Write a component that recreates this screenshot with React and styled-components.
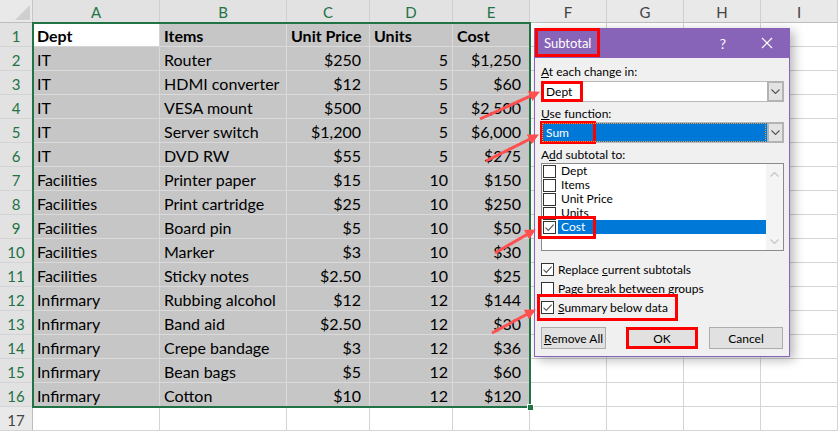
import React from 'react';
import styled, { createGlobalStyle, css } from 'styled-components';

const GlobalStyle = createGlobalStyle`
  html, body { margin: 0; padding: 0; background: #fff; }
  body { font-family: Lato, "Liberation Sans", sans-serif; }
  #root { width: 838px; height: 432px; }
`;

const cols = ['A', 'B', 'C', 'D', 'E', 'F', 'G', 'H', 'I'];
const data = [
  ['Dept', 'Items', 'Unit Price', 'Units', 'Cost'],
  ['IT', 'Router', '$250', '5', '$1,250'],
  ['IT', 'HDMI converter', '$12', '5', '$60'],
  ['IT', 'VESA mount', '$500', '5', '$2,500'],
  ['IT', 'Server switch', '$1,200', '5', '$6,000'],
  ['IT', 'DVD RW', '$55', '5', '$275'],
  ['Facilities', 'Printer paper', '$15', '10', '$150'],
  ['Facilities', 'Print cartridge', '$25', '10', '$250'],
  ['Facilities', 'Board pin', '$5', '10', '$50'],
  ['Facilities', 'Marker', '$3', '10', '$30'],
  ['Facilities', 'Sticky notes', '$2.50', '10', '$25'],
  ['Infirmary', 'Rubbing alcohol', '$12', '12', '$144'],
  ['Infirmary', 'Band aid', '$2.50', '12', '$30'],
  ['Infirmary', 'Crepe bandage', '$3', '12', '$36'],
  ['Infirmary', 'Bean bags', '$5', '12', '$60'],
  ['Infirmary', 'Cotton', '$10', '12', '$120'],
];

const gridTemplate = css`
  display: grid;
  grid-template-columns: 33px 127px 127px 83px 83px repeat(5, 77px);
  grid-template-rows: 23px repeat(17, 24px);
`;

const Stage = styled.div`
  position: relative;
  display: grid;
  width: 838px;
  height: 432px;
  overflow: hidden;
  background: #fff;
`;

const Sheet = styled.div`
  ${gridTemplate};
  grid-area: 1 / 1;
`;

const Layer = styled.div`
  ${gridTemplate};
  grid-area: 1 / 1;
  pointer-events: none;
  z-index: 1;
`;

const Corner = styled.div`
  position: relative;
  background: #e9e9e9;
  border-right: 1px solid #c6c6c6;
  border-bottom: 1px solid #bdbdbd;
  &::after {
    content: '';
    position: absolute;
    right: 2px;
    bottom: 2px;
    border-style: solid;
    border-width: 0 0 15px 15px;
    border-color: transparent transparent #cfcfcf transparent;
  }
`;

const ColHead = styled.div`
  background: ${(p) => (p.$active ? '#e2e2e2' : '#e9e9e9')};
  color: ${(p) => (p.$active ? '#217346' : '#444')};
  border-right: 1px solid #cfcfcf;
  border-bottom: 1px solid #bdbdbd;
  display: flex;
  align-items: center;
  justify-content: center;
  font-size: 15px;
  line-height: 20px;
  padding-top: 1px;
`;

const RowHead = styled.div`
  background: ${(p) => (p.$active ? '#e2e2e2' : '#e9e9e9')};
  color: ${(p) => (p.$active ? '#217346' : '#444')};
  border-right: 1px solid #bdbdbd;
  border-bottom: 1px solid #d4d4d4;
  display: flex;
  align-items: flex-end;
  justify-content: center;
  font-size: 15px;
  line-height: 20px;
`;

const Cell = styled.div`
  background: ${(p) => (p.$sel ? '#c6c6c6' : '#fff')};
  border-right: 1px solid ${(p) => (p.$sel ? '#dadada' : '#d4d4d4')};
  border-bottom: 1px solid ${(p) => (p.$sel ? '#dadada' : '#d4d4d4')};
  display: flex;
  align-items: flex-end;
  justify-content: ${(p) => (p.$num ? 'flex-end' : 'flex-start')};
  padding: 0 ${(p) => p.$pr}px 0 4px;
  font-size: 16px;
  line-height: 20px;
  font-weight: ${(p) => (p.$bold ? 700 : 400)};
  color: #000;
  white-space: nowrap;
  overflow: hidden;
`;

const Selection = styled.div`
  grid-column: 2 / 7;
  grid-row: 2 / 18;
  margin: -1px;
  border: 2px solid #217346;
  position: relative;
`;

const FillHandle = styled.span`
  position: absolute;
  right: -5px;
  bottom: -5px;
  width: 5px;
  height: 5px;
  background: #217346;
  border: 1px solid #fff;
`;

/* ---------- dialog ---------- */

const mark = css`
  outline: 3px solid #f00;
  outline-offset: -3px;
`;

const Dialog = styled.div`
  position: absolute;
  left: 534px;
  top: 28px;
  width: 256px;
  height: 329px;
  box-sizing: border-box;
  background: #f0f0f0;
  border: 1px solid #8764b8;
  box-shadow: 4px 3px 10px rgba(0, 0, 0, 0.28);
  display: flex;
  flex-direction: column;
  z-index: 2;
  font-family: Lato, "Liberation Sans", sans-serif;
  font-size: 12px;
  color: #000;
`;

const TitleBar = styled.div`
  height: 30px;
  margin: -1px -1px 0 -1px;
  background: #8764b8;
  display: flex;
  align-items: stretch;
  color: #fff;
`;

const TitleText = styled.span`
  display: flex;
  align-items: center;
  height: 29px;
  padding: 0 9px 0 9px;
  margin-left: 1px;
  font-size: 13px;
  ${(p) => p.$mark && mark};
`;

const Spacer = styled.span`
  flex: 1;
`;

const HelpBtn = styled.span`
  width: 24px;
  margin-right: 9px;
  display: flex;
  align-items: center;
  justify-content: center;
  font-size: 14px;
`;

const CloseBtn = styled.span`
  width: 46px;
  display: flex;
  align-items: center;
  justify-content: center;
`;

const Body = styled.div`
  display: flex;
  flex-direction: column;
  padding: 0 5px 0 6px;
`;

const Label = styled.div`
  line-height: 14px;
  margin-top: ${(p) => p.$mt}px;
  white-space: nowrap;
`;

const Combo = styled.div`
  display: flex;
  height: 21px;
  margin-top: ${(p) => p.$mt}px;
`;

const ComboField = styled.div`
  flex: 1;
  display: flex;
  align-items: stretch;
  background: ${(p) => (p.$focus ? '#0078d7' : '#fff')};
  color: ${(p) => (p.$focus ? '#fff' : '#000')};
  border: 1px solid #b9b9b9;
  border-right: none;
  ${(p) => p.$focus && css`
    outline: 1px dotted #e8a040;
    outline-offset: -2px;
  `};
`;

const ComboValue = styled.span`
  display: flex;
  align-items: center;
  width: ${(p) => p.$w}px;
  margin: -1px 0 -1px -1px;
  padding-left: 5px;
  box-sizing: border-box;
  ${(p) => p.$mark && css`
    outline: 3px solid #f00;
    outline-offset: ${p.$off}px;
  `};
`;

const DropBtn = styled.div`
  width: 17px;
  box-sizing: border-box;
  background: #e3e3e3;
  border: 2px solid #b3b3b3;
  display: flex;
  align-items: center;
  justify-content: center;
`;

const ListBox = styled.div`
  display: flex;
  height: 88px;
  margin-top: 1px;
  box-sizing: border-box;
  background: #fff;
  border: 1px solid #8a8a8a;
`;

const ListItems = styled.div`
  flex: 1;
  display: flex;
  flex-direction: column;
`;

const ListItem = styled.div`
  position: relative;
  height: 14px;
  display: flex;
  align-items: center;
  padding-left: 1px;
  ${(p) => p.$mark && css`
    &::after {
      content: '';
      position: absolute;
      left: -4px;
      top: -4px;
      width: 58px;
      height: 23px;
      box-sizing: border-box;
      border: 3px solid #f00;
    }
  `};
`;

const ItemText = styled.span`
  flex: 1;
  margin-left: 2px;
  padding-left: 3px;
  line-height: 14px;
  background: ${(p) => (p.$sel ? '#0078d7' : 'transparent')};
  color: ${(p) => (p.$sel ? '#fff' : '#000')};
`;

const ScrollBar = styled.div`
  width: 17px;
  background: #f4f4f4;
  display: flex;
  flex-direction: column;
  justify-content: space-between;
  align-items: center;
  padding: 8px 0 6px;
`;

const Box = styled.span`
  width: 13px;
  height: 13px;
  box-sizing: border-box;
  border: 1px solid #333;
  background: #fff;
  display: inline-flex;
  align-items: center;
  justify-content: center;
  flex: none;
`;

const CheckRow = styled.div`
  display: flex;
  align-items: center;
  align-self: flex-start;
  height: 19px;
  margin-top: ${(p) => p.$mt || 0}px;
  padding-right: ${(p) => (p.$mark ? 6 : 0)}px;
  ${(p) => p.$mark && css`
    outline: 3px solid #f00;
    outline-offset: 1px;
  `};
`;

const CheckText = styled.span`
  margin-left: 4px;
  white-space: nowrap;
`;

const Buttons = styled.div`
  display: flex;
  margin-top: 10px;
`;

const Button = styled.div`
  height: 22px;
  width: ${(p) => p.$w}px;
  margin-left: ${(p) => p.$ml || 0}px;
  box-sizing: border-box;
  background: #e1e1e1;
  border: 1px solid #adadad;
  display: flex;
  align-items: center;
  justify-content: center;
  ${(p) => p.$mark && mark};
`;

const ArrowLayer = styled.svg`
  position: absolute;
  left: 0;
  top: 0;
  z-index: 3;
  pointer-events: none;
`;

function Check({ checked }) {
  return (
    <Box>
      {checked && (
        <svg width="11" height="11" viewBox="0 0 11 11">
          <path d="M1.5 5.6 L4.3 8.4 L9.6 2.6" fill="none" stroke="#555" strokeWidth="1.1" />
        </svg>
      )}
    </Box>
  );
}

function Chevron({ color = '#555', up }) {
  return (
    <svg width="9" height="5" viewBox="0 0 9 5">
      <path d={up ? 'M0.5 4.5 L4.5 0.5 L8.5 4.5' : 'M0.5 0.5 L4.5 4.5 L8.5 0.5'} fill="none" stroke={color} strokeWidth="1.1" />
    </svg>
  );
}

const arrows = [
  [480, 119, 537, 93],
  [486, 161, 536, 136],
  [495, 253, 533, 231],
  [492, 333, 533, 311],
];

export default function App() {
  return (
    <>
      <GlobalStyle />
      <Stage>
        <Sheet>
          <Corner />
          {cols.map((c, i) => (
            <ColHead key={c} $active={i < 5}>{c}</ColHead>
          ))}
          {Array.from({ length: 17 }).map((_, r) => (
            <React.Fragment key={r}>
              <RowHead $active={r < 16}>{r + 1}</RowHead>
              {cols.map((c, ci) => {
                const v = r < 16 && ci < 5 ? data[r][ci] : '';
                const sel = r < 16 && ci < 5 && !(r === 0 && ci === 0);
                const num = r > 0 && (ci === 2 || ci === 3 || ci === 4);
                const pr = ci === 3 ? 4 : ci === 2 || ci === 4 ? 8 : 3;
                return (
                  <Cell key={c} $sel={sel} $num={num} $pr={pr} $bold={r === 0}>
                    {v}
                  </Cell>
                );
              })}
            </React.Fragment>
          ))}
        </Sheet>
        <Layer>
          <Selection>
            <FillHandle />
          </Selection>
        </Layer>

        <Dialog>
          <TitleBar>
            <TitleText $mark>Subtotal</TitleText>
            <Spacer />
            <HelpBtn>?</HelpBtn>
            <CloseBtn>
              <svg width="12" height="12" viewBox="0 0 12 12">
                <path d="M1 1 L11 11 M11 1 L1 11" stroke="#fff" strokeWidth="1.2" />
              </svg>
            </CloseBtn>
          </TitleBar>
          <Body>
            <Label $mt={7}><u>A</u>t each change in:</Label>
            <Combo $mt={2}>
              <ComboField>
                <ComboValue $w={42} $mark $off={-3}>Dept</ComboValue>
              </ComboField>
              <DropBtn><Chevron /></DropBtn>
            </Combo>
            <Label $mt={5}><u>U</u>se function:</Label>
            <Combo $mt={1}>
              <ComboField $focus>
                <ComboValue $w={54} $mark $off={-2}>Sum</ComboValue>
              </ComboField>
              <DropBtn><Chevron /></DropBtn>
            </Combo>
            <Label $mt={5}>A<u>d</u>d subtotal to:</Label>
            <ListBox>
              <ListItems>
                <ListItem><Check /><ItemText>Dept</ItemText></ListItem>
                <ListItem><Check /><ItemText>Items</ItemText></ListItem>
                <ListItem><Check /><ItemText>Unit Price</ItemText></ListItem>
                <ListItem><Check /><ItemText>Units</ItemText></ListItem>
                <ListItem $mark><Check checked /><ItemText $sel>Cost</ItemText></ListItem>
              </ListItems>
              <ScrollBar>
                <Chevron color="#c4c4c4" up />
                <Chevron color="#c4c4c4" />
              </ScrollBar>
            </ListBox>
            <CheckRow $mt={9}>
              <Check checked />
              <CheckText>Replace <u>c</u>urrent subtotals</CheckText>
            </CheckRow>
            <CheckRow>
              <Check />
              <CheckText><u>P</u>age break between groups</CheckText>
            </CheckRow>
            <CheckRow $mark>
              <Check checked />
              <CheckText><u>S</u>ummary below data</CheckText>
            </CheckRow>
            <Buttons>
              <Button $w={65}><u>R</u>emove All</Button>
              <Button $w={72} $ml={20} $mark>OK</Button>
              <Button $w={74} $ml={11}>Cancel</Button>
            </Buttons>
          </Body>
        </Dialog>

        <ArrowLayer width="838" height="432" viewBox="0 0 838 432">
          <defs>
            <marker id="head" viewBox="0 0 10 10" refX="7" refY="5" markerWidth="3.6" markerHeight="3.6" orient="auto">
              <path d="M0 0 L10 5 L0 10 z" fill="#ff4f4f" />
            </marker>
          </defs>
          {arrows.map(([x1, y1, x2, y2], i) => (
            <line key={i} x1={x1} y1={y1} x2={x2} y2={y2} stroke="#ff4f4f" strokeWidth="3" markerEnd="url(#head)" />
          ))}
        </ArrowLayer>
      </Stage>
    </>
  );
}
